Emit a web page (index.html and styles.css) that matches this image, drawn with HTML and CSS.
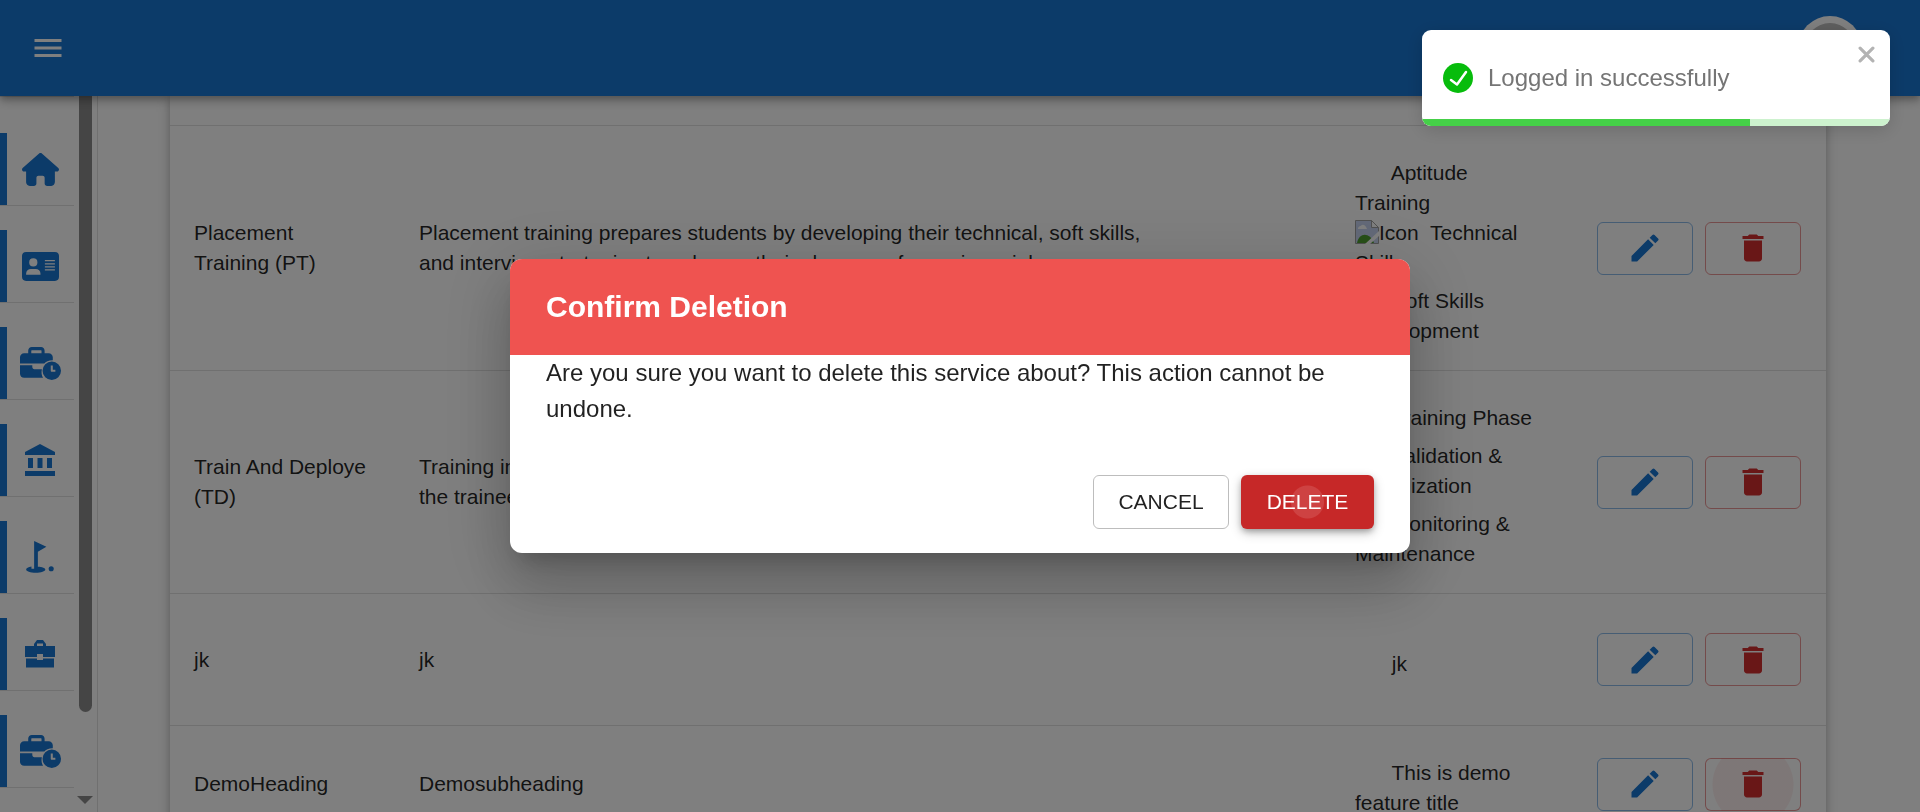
FILE: index.html
```html
<!DOCTYPE html>
<html lang="en">
<head>
<meta charset="utf-8">
<title>Services</title>
<link rel="stylesheet" href="styles.css">
</head>
<body>
<svg class="defs" aria-hidden="true">
  <symbol id="i-home" viewBox="0 0 576 512"><path d="M575.8 255.5c0 18-15 32.1-32 32.1h-32l.7 160.2c0 36-24 64.2-56 64.200h-64c-22 0-40-17.900-40-40V384c0-17.700-14.300-32-32-32h-64c-17.700 0-32 14.300-32 32v88c0 22.100-17.900 40-40 40h-64c-32 0-56.500-28-56.500-56V287.600H32c-18 0-32-14-32-32.100 0-9 3-17 10-24L266.400 8c7-7 15-8 22-8s15 2 21 7l255.400 224.500c8 7 12 15 11 24z"/></symbol>
  <symbol id="i-card" viewBox="0 0 576 448"><path fill-rule="evenodd" d="M64 0h448a64 64 0 0 1 64 64v320a64 64 0 0 1-64 64H64a64 64 0 0 1-64-64V64A64 64 0 0 1 64 0zM176 96a64 64 0 1 0 0 128 64 64 0 0 0 0-128zM64 352h224v-16a74 74 0 0 0-74-74h-76a74 74 0 0 0-74 74zM356 124v20h156v-20zm0 48v20h156v-20zm0 48v20h156v-20zm0 48v20h156v-20z"/></symbol>
  <symbol id="i-case-clock" viewBox="0 0 640 512"><path fill-rule="evenodd" d="M184 48h144c4 0 8 4 8 8v40H176V56c0-4 4-8 8-8zm-56 8v40H64c-35 0-64 29-64 64v96h380c24-28 60-50 132-52v-44c0-35-29-64-64-64h-64V56c0-31-25-56-56-56H184c-31 0-56 25-56 56zM0 282v134c0 35 29 64 64 64h296c-24-42-30-88-18-136H224c-18 0-32-14-32-32v-30z"/><path fill-rule="evenodd" d="M496 224a144 144 0 1 1 0 288 144 144 0 0 1 0-288zm-16 64v80c0 9 7 16 16 16h56v-32h-40v-64z"/></symbol>
  <symbol id="i-bank" viewBox="0 0 30 32"><path d="M15 0 30 8v3H0V8zM3 14h5v10H3zm9.500 0h5v10h-5zM22 14h5v10h-5zM0 27h30v5H0z"/></symbol>
  <symbol id="i-golf" viewBox="0 0 26 30"><circle cx="23.500" cy="26" r="2.400"/><path d="M11 10v14.200c4 .2 7 1.200 7 2.500 0 1.700-4 3-9 3s-9-1.300-9-3c0-1.200 2-2.200 5-2.700v2h2.500V0L19 5.500z"/></symbol>
  <symbol id="i-case" viewBox="0 0 30 28"><path fill-rule="evenodd" d="M0 6h9V4l3-4h6l3 4v2h9v11H18v-3h-6v3H0zm12 0h6V3.500h-6zM1 18.500h11V20h6v-1.500h11v9H1z"/></symbol>
  <symbol id="i-edit" viewBox="0 0 24 24"><path d="M3 17.250V21h3.750L17.810 9.940l-3.750-3.750L3 17.250zM20.710 7.040a1 1 0 0 0 0-1.410l-2.340-2.340a1 1 0 0 0-1.410 0l-1.830 1.830 3.750 3.750 1.830-1.830z"/></symbol>
  <symbol id="i-trash" viewBox="0 0 24 24"><path d="M6 19c0 1.100.9 2 2 2h8c1.100 0 2-.9 2-2V7H6v12zM19 4h-3.500l-1-1h-5l-1 1H5v2h14V4z"/></symbol>
</svg>

<header class="appbar">
  <button class="menu-btn" type="button" aria-label="Open menu">
    <svg viewBox="0 0 24 24"><path d="M3 18h18v-2H3v2zm0-5h18v-2H3v2zm0-7v2h18V6H3z"/></svg>
  </button>
  <button class="avatar" type="button" aria-label="Account"><span class="avatar-face"></span></button>
</header>

<div class="shell">
  <aside class="sidebar">
    <nav class="side-nav">
      <a class="side-link" href="#" aria-label="Home"><svg class="ico-l"><use href="#i-home"/></svg></a>
      <a class="side-link" href="#" aria-label="Profile"><svg class="ico-l"><use href="#i-card"/></svg></a>
      <a class="side-link" href="#" aria-label="Openings"><svg class="ico-xl"><use href="#i-case-clock"/></svg></a>
      <a class="side-link" href="#" aria-label="Institute"><svg class="ico-m"><use href="#i-bank"/></svg></a>
      <a class="side-link" href="#" aria-label="Events"><svg class="ico-m"><use href="#i-golf"/></svg></a>
      <a class="side-link" href="#" aria-label="Services"><svg class="ico-s"><use href="#i-case"/></svg></a>
      <a class="side-link" href="#" aria-label="Internships"><svg class="ico-xl"><use href="#i-case-clock"/></svg></a>
    </nav>
    <div class="scrollbar" aria-hidden="true"><span class="thumb"></span><span class="arrow"></span></div>
  </aside>

  <main class="content">
    <table class="services">
      <colgroup><col class="c-name"><col><col class="c-feat"><col class="c-act"></colgroup>
      <tbody>
        <tr class="row-cut"><td></td><td></td><td></td><td></td></tr>
        <tr>
          <td>Placement Training (PT)</td>
          <td><p class="about">Placement training prepares students by developing their technical, soft skills, and interview strategies to enhance their chances of securing a job.</p></td>
          <td>
            <div><span class="pic"></span> Aptitude Training</div>
            <div><svg class="broken" viewBox="0 0 24 24"><path d="M.5.500h16l7 7v16H.5z" fill="#c7d3f0" stroke="#a0a0a0"/><path d="M16.500.500v7h7z" fill="#fff" stroke="#a0a0a0"/><path d="M3 9c0-3 3-3 4-4 3-1 4 2 5 4z" fill="#fff"/><path d="M2 23c2-11 13-11 17 0z" fill="#4fa030"/><path d="M24 11 10 24h5l9-8z" fill="#fff"/></svg>Icon&nbsp; Technical Skills</div>
            <div><span class="pic"></span> Soft Skills Development</div>
          </td>
          <td><div class="acts">
            <button class="act edit" type="button" aria-label="Edit"><svg><use href="#i-edit"/></svg></button>
            <button class="act del" type="button" aria-label="Delete"><svg><use href="#i-trash"/></svg></button>
          </div></td>
        </tr>
        <tr>
          <td>Train And Deploye (TD)</td>
          <td><p class="about">Training in the skills that a client needs is given first, and after that <br>the trainees are deployed to the client.</p></td>
          <td>
            <div><span class="pic"></span> Training Phase</div>
            <div><span class="pic"></span> Validation &amp; Optimization</div>
            <div><span class="pic"></span> Monitoring &amp; Maintenance</div>
          </td>
          <td><div class="acts">
            <button class="act edit" type="button" aria-label="Edit"><svg><use href="#i-edit"/></svg></button>
            <button class="act del" type="button" aria-label="Delete"><svg><use href="#i-trash"/></svg></button>
          </div></td>
        </tr>
        <tr class="row-roomy">
          <td>jk</td>
          <td>jk</td>
          <td><div><span class="pic"></span> jk</div></td>
          <td><div class="acts">
            <button class="act edit" type="button" aria-label="Edit"><svg><use href="#i-edit"/></svg></button>
            <button class="act del" type="button" aria-label="Delete"><svg><use href="#i-trash"/></svg></button>
          </div></td>
        </tr>
        <tr>
          <td>DemoHeading</td>
          <td>Demosubheading</td>
          <td><div><span class="pic"></span> This is demo feature title</div></td>
          <td><div class="acts">
            <button class="act edit" type="button" aria-label="Edit"><svg><use href="#i-edit"/></svg></button>
            <button class="act del pressed" type="button" aria-label="Delete"><svg><use href="#i-trash"/></svg></button>
          </div></td>
        </tr>
      </tbody>
    </table>
  </main>
</div>

<div class="backdrop">
  <section class="dialog" role="dialog" aria-modal="true" aria-labelledby="dlg-title">
    <h2 class="dialog-title" id="dlg-title">Confirm Deletion</h2>
    <p class="dialog-text">Are you sure you want to delete this service about? This action cannot be undone.</p>
    <div class="dialog-actions">
      <button class="btn btn-cancel" type="button">CANCEL</button>
      <button class="btn btn-delete" type="button">DELETE</button>
    </div>
  </section>
</div>

<div class="toast" role="alert">
  <svg class="toast-ok" viewBox="0 0 30 30"><circle cx="15" cy="15" r="15" fill="#07bc0c"/><path d="M8 17l6 4.500L23 9" fill="none" stroke="#fff" stroke-width="2.500" stroke-linecap="round" stroke-linejoin="round"/></svg>
  <span>Logged in successfully</span>
  <button class="toast-close" type="button" aria-label="Close"><svg viewBox="0 0 16 16"><path d="M2 2l12 12M14 2 2 14" stroke="#b3b3b3" stroke-width="3" stroke-linecap="round"/></svg></button>
  <div class="toast-track"><div class="toast-bar" style="width:70%"></div></div>
</div>
</body>
</html>
```
FILE: styles.css
```css
* { box-sizing: border-box; }
body {
  margin: 0;
  height: 100vh;
  overflow: hidden;
  display: flex;
  flex-direction: column;
  background: #fff;
  color: rgba(0, 0, 0, 0.87);
  font: 21px/30px "Liberation Sans", Arial, sans-serif;
}
button { font: inherit; cursor: pointer; }
.defs { display: none; }

.appbar {
  flex: none;
  height: 96px;
  padding: 0 58px 0 27px;
  display: flex;
  align-items: center;
  justify-content: space-between;
  background: #1976d2;
  box-shadow: 0 3px 6px -1px rgba(0,0,0,.2), 0 6px 8px rgba(0,0,0,.14), 0 2px 15px rgba(0,0,0,.12);
  z-index: 1;
}
.menu-btn { display: flex; padding: 3px; border: 0; background: none; }
.menu-btn svg { width: 36px; height: 36px; fill: #fff; }
.avatar {
  width: 64px;
  height: 64px;
  padding: 7px;
  border: 0;
  border-radius: 50%;
  background: #fff;
}
.avatar-face { display: block; height: 100%; border-radius: 50%; background: #bdbdbd; }

.shell { flex: 1; min-height: 0; display: flex; }
.sidebar { flex: none; width: 98px; display: flex; border-right: 1px solid #e0e0e0; }
.side-nav { flex: 1; border-top: 1px solid #e0e0e0; padding-top: 36px; }
.side-link {
  display: flex;
  align-items: center;
  justify-content: center;
  height: 73px;
  margin-bottom: 24px;
  border-bottom: 1px solid #e0e0e0;
  background: linear-gradient(#1976d2, #1976d2) left / 7px 100% no-repeat;
  color: #1976d2;
  padding-left: 6px;
}
.side-link svg { fill: currentColor; }
.ico-s { width: 30px; height: 28px; }
.ico-m { width: 30px; height: 32px; }
.ico-l { width: 37px; height: 33px; }
.ico-xl { width: 41px; height: 33px; }
.scrollbar {
  width: 23px;
  display: flex;
  flex-direction: column;
  align-items: center;
  justify-content: space-between;
  padding: 0 1px 8px 0;
}
.thumb { width: 13px; height: 87%; border-radius: 0 0 7px 7px; background: #8b8b8b; }
.arrow { border: 8px solid transparent; border-top-color: #8b8b8b; border-bottom: 0; }

.content { flex: 1; min-width: 0; padding: 0 94px 0 72px; overflow: hidden; }
.services {
  width: 100%;
  table-layout: fixed;
  border-collapse: separate;
  border-spacing: 0;
  box-shadow: 0 2px 8px rgba(0,0,0,.2), 0 3px 15px rgba(0,0,0,.12);
}
.c-name { width: 225px; }
.c-feat { width: 242px; }
.c-act { width: 253px; }
.services td { padding: 24px; border-bottom: 1px solid #e0e0e0; vertical-align: middle; }
.services td:nth-child(3) { padding-right: 36px; }
.services .row-cut td { padding: 0; height: 30px; }
.row-roomy { height: 132px; }
.about { margin: 0; max-width: 750px; }
.pic { display: inline-block; width: 30px; height: 30px; margin-right: 1px; }
.broken { width: 24px; height: 24px; vertical-align: text-bottom; }
.acts { display: flex; gap: 12px; }
.act {
  flex: none;
  width: 96px;
  height: 53px;
  display: flex;
  align-items: center;
  justify-content: center;
  border: 1px solid;
  border-radius: 6px;
  background: none;
}
.act svg { width: 36px; height: 36px; }
.edit { border-color: rgba(25,118,210,.5); fill: #1976d2; }
.del { border-color: rgba(211,47,47,.5); fill: #d32f2f; }
.pressed { background: radial-gradient(circle, rgba(211,47,47,.08) 40px, transparent 41px); }

.backdrop {
  position: fixed;
  inset: 0;
  z-index: 2;
  display: flex;
  align-items: center;
  justify-content: center;
  background: rgba(0,0,0,.5);
}
.dialog {
  width: 900px;
  max-width: 90%;
  border-radius: 12px;
  overflow: hidden;
  background: #fff;
  box-shadow: 0 16px 22px -10px rgba(0,0,0,.2), 0 36px 57px 4px rgba(0,0,0,.14), 0 14px 69px 12px rgba(0,0,0,.12);
}
.dialog-title {
  margin: 0;
  padding: 24px 36px;
  background: #ef5350;
  color: #fff;
  font-size: 30px;
  line-height: 48px;
}
.dialog-text { margin: 0; padding: 0 36px 30px; font-size: 24px; line-height: 36px; }
.dialog-actions { display: flex; justify-content: flex-end; gap: 12px; padding: 18px 36px 24px; }
.btn { height: 54px; min-width: 133px; padding: 0 24px; border: 1px solid; border-radius: 6px; }
.btn-cancel { min-width: 136px; border-color: #bdbdbd; background: #fff; color: rgba(0,0,0,.87); }
.btn-delete {
  border-color: transparent;
  color: #fff;
  background: radial-gradient(circle, #ce4242 16px, transparent 17px) #c62828;
  background-origin: border-box;
  box-shadow: 0 3px 6px -1px rgba(0,0,0,.3), 0 4px 12px rgba(0,0,0,.2);
}

.toast {
  position: fixed;
  top: 30px;
  right: 30px;
  z-index: 3;
  width: 468px;
  height: 96px;
  padding: 0 21px;
  display: flex;
  align-items: center;
  gap: 15px;
  border-radius: 9px;
  overflow: hidden;
  background: #fff;
  color: #757575;
  font-size: 24px;
  box-shadow: 0 4px 18px rgba(0,0,0,.15);
}
.toast-ok { width: 30px; height: 30px; }
.toast-close { position: absolute; top: 16px; right: 15px; display: flex; padding: 0; border: 0; background: none; }
.toast-close svg { width: 17px; height: 17px; }
.toast-track { position: absolute; left: 0; right: 0; bottom: 0; height: 7px; background: #cdf2ce; }
.toast-bar { height: 100%; background: #45d048; }
```
